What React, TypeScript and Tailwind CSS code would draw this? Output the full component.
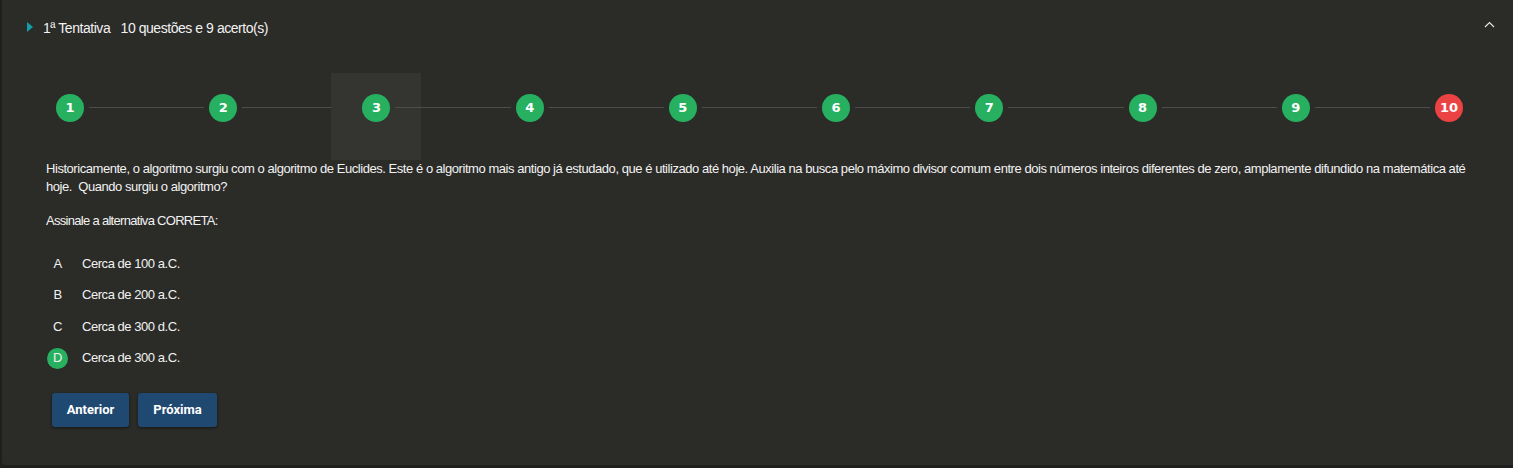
import React from "react";

const steps = [1, 2, 3, 4, 5, 6, 7, 8, 9, 10];
const wrong = [10];
const current = 3;

const options = [
  { key: "A", text: "Cerca de 100 a.C." },
  { key: "B", text: "Cerca de 200 a.C." },
  { key: "C", text: "Cerca de 300 d.C." },
  { key: "D", text: "Cerca de 300 a.C.", selected: true },
];

function StepCircle({ n }: { n: number }) {
  const isWrong = wrong.includes(n);
  return (
    <div className="relative flex items-center justify-center">
      {n === current && <div className="absolute w-[90px] h-[87px] bg-[#343431] left-[-31px] top-[-21px]" />}
      <div
        className={`relative w-[28px] h-[28px] rounded-full flex items-center justify-center text-white text-[13px] font-bold font-['DejaVu_Sans',sans-serif] ${
          isWrong ? "bg-[#eb4343]" : "bg-[#27b060]"
        }`}
      >
        {n}
      </div>
    </div>
  );
}

export default function App() {
  return (
    <div className="w-[1513px] h-[468px] bg-[#1f1f1d] font-['Liberation_Sans',sans-serif] overflow-hidden">
      <div className="ml-[2px] h-[465px] bg-[#2b2b28] rounded-bl-[3px] text-[#f2f2f2]">
        {/* header */}
        <div className="h-[56px] flex items-center pl-[25px] pr-[18px]">
          <svg width="6" height="10" viewBox="0 0 6 10" className="mb-[2px]">
            <path d="M0 0 L6 5 L0 10 Z" fill="#139fa7" />
          </svg>
          <span className="ml-[10px] text-[14px] tracking-[-0.45px] whitespace-pre">1ª Tentativa   10 questões e 9 acerto(s)</span>
          <div className="flex-1" />
          <svg width="11" height="7" viewBox="0 0 11 7" className="mb-[8px]">
            <path d="M1 6 L5.5 1.5 L10 6" fill="none" stroke="#e6e6e6" strokeWidth="1.2" />
          </svg>
        </div>

        {/* stepper */}
        <div className="flex items-center pl-[54px] pr-[50px] mt-[38px] h-[28px]">
          {steps.map((n, i) => (
            <React.Fragment key={n}>
              <StepCircle n={n} />
              {i < steps.length - 1 && <div className="relative flex-1 h-px bg-[#4d4d49] mx-[5px] -mt-[2px]" />}
            </React.Fragment>
          ))}
        </div>

        {/* question */}
        <div className="pl-[44px] pr-[40px] mt-[38px] text-[13px] tracking-[-0.45px] leading-[18px]">
          <p className="relative">
            Historicamente, o algoritmo surgiu com o algoritmo de Euclides. Este é o algoritmo mais antigo já estudado, que é utilizado até hoje. Auxilia na busca pelo máximo divisor comum entre dois números inteiros diferentes de zero, amplamente difundido na matemática até hoje.&nbsp; Quando surgiu o algoritmo?
          </p>
          <p className="mt-[16px] tracking-[-0.7px]">Assinale a alternativa CORRETA:</p>

          <div className="mt-[23px] flex flex-col gap-[10.5px]">
            {options.map((o) => (
              <div key={o.key} className="flex items-center h-[21px]">
                <div
                  className={`w-[21px] h-[21px] ml-[1px] rounded-full flex items-center justify-center text-[13px] ${
                    o.selected ? "bg-[#27b060]" : ""
                  }`}
                >
                  {o.key}
                </div>
                <span className="ml-[14px]">{o.text}</span>
              </div>
            ))}
          </div>

          <div className="mt-[24px] flex gap-[9px] ml-[6px] font-['Roboto',sans-serif] tracking-normal">
            <button className="w-[77px] h-[34px] rounded-[3px] bg-[#1f4970] text-white text-[13px] font-bold shadow-[0_1px_3px_rgba(0,0,0,0.5)]">
              Anterior
            </button>
            <button className="w-[79px] h-[34px] rounded-[3px] bg-[#1f4970] text-white text-[13px] font-bold shadow-[0_1px_3px_rgba(0,0,0,0.5)]">
              Próxima
            </button>
          </div>
        </div>
      </div>
    </div>
  );
}
